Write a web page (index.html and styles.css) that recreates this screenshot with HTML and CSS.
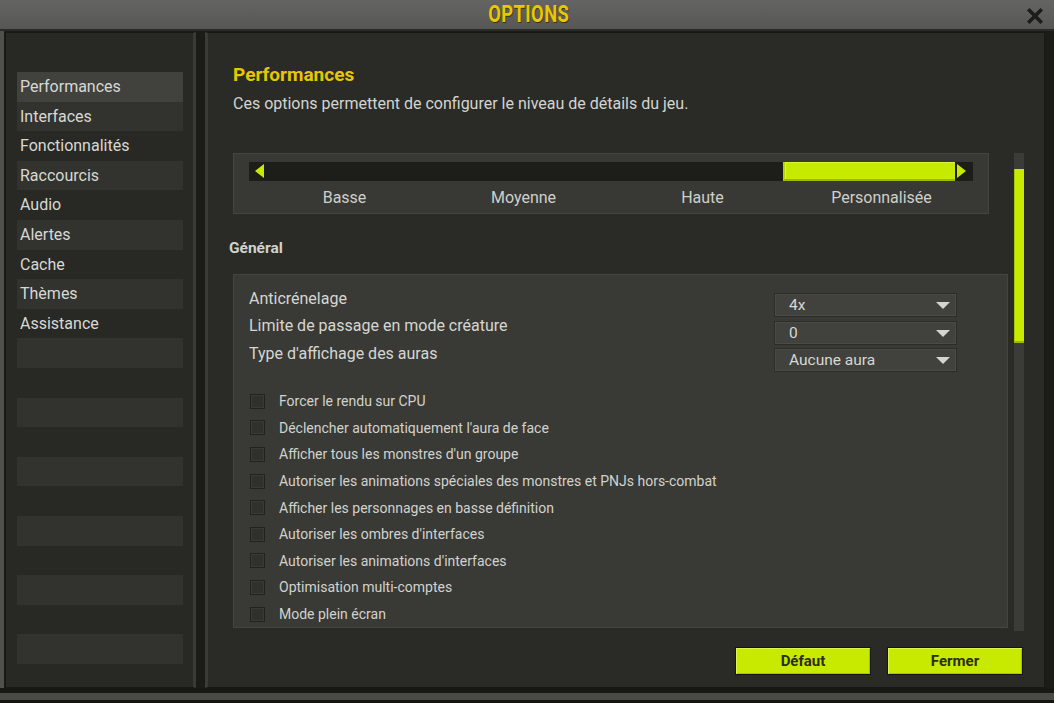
FILE: index.html
```html
<!DOCTYPE html>
<html lang="fr">
<head>
    <meta charset="UTF-8">
    <meta name="viewport" content="width=device-width, initial-scale=1.0">
    <title>Options</title>
    <link rel="stylesheet" href="styles.css">
</head>
<body>
    <div class="window">
        <!-- Title bar -->
        <header class="titlebar">
            <h1 class="title">OPTIONS</h1>
            <button class="close-btn" aria-label="Fermer">
                <svg width="16" height="16" viewBox="0 0 16 16">
                    <path d="M2.5 2.5 L13.5 13.5 M13.5 2.5 L2.5 13.5" stroke="#1c1c1a" stroke-width="3.6" stroke-linecap="square" fill="none"/>
                </svg>
            </button>
        </header>

        <div class="frame">
            <div class="panels">
                <!-- Left menu -->
                <nav class="sidebar">
                    <ul class="menu">
                        <li class="menu-item active">Performances</li>
                        <li class="menu-item">Interfaces</li>
                        <li class="menu-item">Fonctionnalités</li>
                        <li class="menu-item">Raccourcis</li>
                        <li class="menu-item">Audio</li>
                        <li class="menu-item">Alertes</li>
                        <li class="menu-item">Cache</li>
                        <li class="menu-item">Thèmes</li>
                        <li class="menu-item">Assistance</li>
                        <li class="menu-item"></li>
                        <li class="menu-item"></li>
                        <li class="menu-item"></li>
                        <li class="menu-item"></li>
                        <li class="menu-item"></li>
                        <li class="menu-item"></li>
                        <li class="menu-item"></li>
                        <li class="menu-item"></li>
                        <li class="menu-item"></li>
                        <li class="menu-item"></li>
                        <li class="menu-item"></li>
                    </ul>
                </nav>

                <!-- Main content -->
                <main class="content">
                    <h2 class="page-title">Performances</h2>
                    <p class="page-desc">Ces options permettent de configurer le niveau de détails du jeu.</p>

                    <div class="scroller">
                        <div class="scroll-body">
                            <div class="quality-box">
                                <div class="quality-track">
                                    <span class="arrow arrow-left"></span>
                                    <span class="quality-fill"></span>
                                    <span class="arrow arrow-right"></span>
                                </div>
                                <div class="quality-labels">
                                    <span>Basse</span>
                                    <span>Moyenne</span>
                                    <span>Haute</span>
                                    <span>Personnalisée</span>
                                </div>
                            </div>

                            <h3 class="section-title">Général</h3>

                            <div class="settings-box">
                                <div class="select-row">
                                    <span class="select-label">Anticrénelage</span>
                                    <div class="dropdown">4x<i class="caret"></i></div>
                                </div>
                                <div class="select-row">
                                    <span class="select-label">Limite de passage en mode créature</span>
                                    <div class="dropdown">0<i class="caret"></i></div>
                                </div>
                                <div class="select-row">
                                    <span class="select-label">Type d'affichage des auras</span>
                                    <div class="dropdown">Aucune aura<i class="caret"></i></div>
                                </div>

                                <ul class="checks">
                                    <li class="check"><span class="box"></span>Forcer le rendu sur CPU</li>
                                    <li class="check"><span class="box"></span>Déclencher automatiquement l'aura de face</li>
                                    <li class="check"><span class="box"></span>Afficher tous les monstres d'un groupe</li>
                                    <li class="check"><span class="box"></span>Autoriser les animations spéciales des monstres et PNJs hors-combat</li>
                                    <li class="check"><span class="box"></span>Afficher les personnages en basse définition</li>
                                    <li class="check"><span class="box"></span>Autoriser les ombres d'interfaces</li>
                                    <li class="check"><span class="box"></span>Autoriser les animations d'interfaces</li>
                                    <li class="check"><span class="box"></span>Optimisation multi-comptes</li>
                                    <li class="check"><span class="box"></span>Mode plein écran</li>
                                </ul>
                            </div>
                        </div>
                        <div class="scrollbar">
                            <div class="scroll-thumb"></div>
                        </div>
                    </div>

                    <div class="actions">
                        <button class="game-button">Défaut</button>
                        <button class="game-button">Fermer</button>
                    </div>
                </main>
            </div>
            <div class="bottom-rim"></div>
        </div>
    </div>
</body>
</html>
```

FILE: styles.css
```css
* {
    box-sizing: border-box;
}

body {
    margin: 0;
    padding: 0;
    background-color: #1b1c18;
    font-family: Roboto, "Liberation Sans", sans-serif;
    color: #d6d6d2;
}

.window {
    width: 1054px;
    height: 703px;
    display: flex;
    flex-direction: column;
    background-color: #1b1c18;
    overflow: hidden;
}

/* Title bar */
.titlebar {
    position: relative;
    height: 31px;
    flex: none;
    display: flex;
    align-items: center;
    justify-content: center;
    padding-top: 1px;
    background: linear-gradient(180deg, #646462 0%, #5c5c5a 60%, #565654 100%);
    border-bottom: 2px solid #2a2a27;
}

.title {
    margin: 0;
    font-size: 23px;
    font-weight: 700;
    line-height: 28px;
    color: #e8c900;
    text-shadow: 1px 1px 0 #3a3306;
    transform: scaleX(0.8);
    letter-spacing: 0.5px;
    margin-left: 4px;
}

.close-btn {
    position: absolute;
    right: 11px;
    top: 8px;
    width: 16px;
    height: 16px;
    padding: 0;
    border: none;
    background: none;
    display: flex;
}

/* Frame around the two panels */
.frame {
    flex: 1;
    display: flex;
    flex-direction: column;
    border-left: 4px solid #4f4f4c;
}

.panels {
    flex: 1;
    display: flex;
    padding: 1px 9px 0 1px;
    gap: 9px;
}

/* Sidebar */
.sidebar {
    width: 191px;
    background-color: #282924;
    border: 1px solid #171814;
    border-right: 3px solid #3a3b36;
    padding: 39px 10px 0 11px;
}

.menu {
    list-style: none;
    margin: 0;
    padding: 0;
}

.menu-item {
    height: 29.6px;
    line-height: 29.6px;
    padding-left: 3px;
    font-size: 16px;
    color: #d8d8d4;
}

.menu-item:nth-child(even) {
    background-color: #32332e;
}

.menu-item.active {
    background-color: #41423d;
}

/* Main content */
.content {
    flex: 1;
    display: flex;
    flex-direction: column;
    background-color: #2a2b26;
    border: 1px solid #171814;
    border-left: 3px solid #3a3b36;
    padding: 30px 20px 0 25px;
}

.page-title {
    margin: 0;
    font-size: 19px;
    font-weight: 700;
    line-height: 24px;
    color: #e6c800;
}

.page-desc {
    margin: 7px 0 0 0;
    font-size: 16px;
    line-height: 20px;
    color: #d4d4d0;
}

.scroller {
    flex: none;
    margin: 39px 0 0 -4px;
    height: 478px;
    display: flex;
    gap: 6px;
    overflow: hidden;
}

.scroll-body {
    flex: 1;
    padding-left: 4px;
}

/* Quality slider */
.quality-box {
    width: 756px;
    height: 61px;
    background-color: #383934;
    border: 1px solid #44453f;
    padding: 8px 15px 0 15px;
}

.quality-track {
    position: relative;
    height: 19px;
    background-color: #1d1e19;
}

.arrow {
    position: absolute;
    top: 2px;
    width: 0;
    height: 0;
    border-top: 7.5px solid transparent;
    border-bottom: 7.5px solid transparent;
}

.arrow-left {
    left: 6px;
    border-right: 9px solid #c8ea00;
}

.arrow-right {
    left: 708px;
    border-left: 9px solid #c8ea00;
}

.quality-fill {
    position: absolute;
    left: 534px;
    top: 0;
    width: 172px;
    height: 19px;
    background-color: #c6ea00;
    border-left: 2px solid #b3d400;
    border-bottom: 2px solid #9dba00;
    box-shadow: inset 1px 1px 0 #d8f63a;
}

.quality-labels {
    display: grid;
    grid-template-columns: repeat(4, 1fr);
    height: 33px;
    align-items: center;
    text-align: center;
    font-size: 16px;
    color: #cfcfcb;
    padding: 0 2px 0 6px;
}

.section-title {
    margin: 25px 0 0 -4px;
    font-size: 15.5px;
    font-weight: 700;
    line-height: 18px;
    color: #d2d2ce;
}

/* General settings */
.settings-box {
    width: 775px;
    margin-top: 17px;
    background-color: #393a35;
    border: 1px solid #44453f;
    padding: 18px 50px 0 15px;
}

.select-row {
    display: flex;
    align-items: center;
    justify-content: space-between;
    height: 24px;
    margin-bottom: 3.5px;
}

.select-label {
    font-size: 16px;
    color: #d6d6d2;
    position: relative;
    top: -7px;
}

.dropdown {
    position: relative;
    width: 183px;
    height: 24px;
    line-height: 22px;
    padding-left: 14px;
    font-size: 15.5px;
    color: #d8d8d4;
    background-color: #41423d;
    border: 1px solid #2c2d28;
    box-shadow: inset 0 0 0 1px #4a4b45;
}

.caret {
    position: absolute;
    right: 6px;
    top: 8px;
    width: 0;
    height: 0;
    border-left: 7px solid transparent;
    border-right: 7px solid transparent;
    border-top: 7px solid #d4d4d0;
}

.checks {
    list-style: none;
    margin: 16px 0 0 0;
    padding: 0;
}

.check {
    display: flex;
    align-items: center;
    height: 26.6px;
    font-size: 14px;
    color: #d2d2ce;
}

.box {
    width: 15px;
    height: 15px;
    margin: 0 14px 0 1px;
    background-color: #30312c;
    border: 1px solid #22231f;
    box-shadow: inset 0 0 0 1px #3a3b36;
}

/* Scrollbar */
.scrollbar {
    width: 10px;
    background-color: #3b3c37;
    position: relative;
}

.scroll-thumb {
    position: absolute;
    left: 0;
    top: 16px;
    width: 10px;
    height: 174px;
    background-color: #c6ea00;
    border-left: 1px solid #a9c800;
    border-bottom: 2px solid #9dba00;
}

/* Bottom buttons */
.actions {
    flex: none;
    display: flex;
    justify-content: flex-end;
    gap: 16px;
    margin-top: 16px;
    padding-right: 1px;
}

.game-button {
    width: 136px;
    height: 28px;
    font-family: Roboto, "Liberation Sans", sans-serif;
    font-size: 15px;
    font-weight: 700;
    color: #2b2d1c;
    background-color: #c8ea00;
    border: 1px solid #141510;
    box-shadow: inset 1px 1px 0 #dcf74a, inset -1px -1px 0 #a8c400;
    padding: 0;
}

.bottom-rim {
    height: 15px;
    flex: none;
    margin-left: -4px;
    border-top: 5px solid #181915;
    border-bottom: 3px solid #141510;
    background-color: #4a4b47;
}
```
